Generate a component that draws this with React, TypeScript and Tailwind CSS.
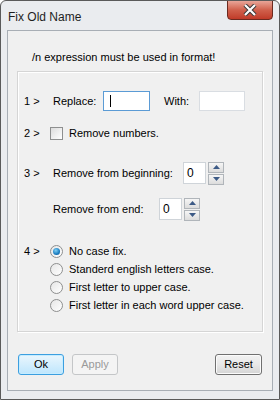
import { useState } from "react";

const font = { fontFamily: '"Liberation Sans", Arial, sans-serif' };

function Spinner({ value }: { value: number }) {
  return (
    <div className="flex items-center gap-[2px]">
      <div className="w-[23px] h-[22px] border border-[#cfd4d9] bg-white pl-[3px] pt-[1px] text-[12px] leading-[18px]">
        {value}
      </div>
      <div className="flex flex-col gap-[1px]">
        <div className="w-[16px] h-[11px] border border-[#b0b5ba] bg-gradient-to-b from-[#f6f6f6] to-[#dcdcdc] flex items-center justify-center">
          <svg width="7" height="4" viewBox="0 0 7 4">
            <path d="M0 4 L3.5 0 L7 4 Z" fill="#3c5a86" />
          </svg>
        </div>
        <div className="w-[16px] h-[11px] border border-[#b0b5ba] bg-gradient-to-b from-[#f6f6f6] to-[#dcdcdc] flex items-center justify-center">
          <svg width="7" height="4" viewBox="0 0 7 4">
            <path d="M0 0 L7 0 L3.5 4 Z" fill="#3c5a86" />
          </svg>
        </div>
      </div>
    </div>
  );
}

function Radio({ checked, label }: { checked?: boolean; label: string }) {
  return (
    <div className="flex items-center h-[18px]">
      <div className="w-[13px] h-[13px] rounded-full border border-[#8e8f8f] bg-gradient-to-br from-[#e6e6e6] to-[#ffffff] flex items-center justify-center">
        {checked && (
          <div className="w-[7px] h-[7px] rounded-full bg-[radial-gradient(circle_at_40%_35%,#7fd0f5,#1a7cc0_60%,#0d4f8a)]" />
        )}
      </div>
      <span className="ml-[6px] whitespace-nowrap">{label}</span>
    </div>
  );
}

export default function App() {
  const [replace] = useState("");

  return (
    <div
      className="w-[280px] h-[400px] bg-[#eaecef] border border-[#5a5a5a] rounded-t-[6px] flex flex-col text-[11px] text-black overflow-hidden whitespace-nowrap"
      style={font}
    >
      {/* title bar */}
      <div className="h-[29px] flex items-start shrink-0">
        <div className="pl-[7px] pt-[7px] text-[12px] text-[#1e1e1e]">Fix Old Name</div>
        <div className="ml-auto mr-[6px] mt-[-1px] w-[46px] h-[20px] rounded-b-[4px] border border-[#6b2a20] bg-gradient-to-b from-[#e8a598] via-[#d0604c] to-[#c03a28] flex items-center justify-center">
          <svg width="14" height="12" viewBox="0 0 14 12">
            <path d="M2 1 L12 11 M12 1 L2 11" stroke="#3a3a3a" strokeWidth="4.2" />
            <path d="M2 1 L12 11 M12 1 L2 11" stroke="#ffffff" strokeWidth="2.2" />
          </svg>
        </div>
      </div>

      {/* client area */}
      <div className="mx-[6px] mb-[8px] flex-1 border border-[#a8aeb5] bg-[#f0f0f0] flex flex-col">
        <div className="pl-[24px] pt-[18px] h-[40px]">/n expression must be used in format!</div>

        {/* group box */}
        <div className="ml-[9px] w-[246px] h-[261px] border border-[#d5d5d5] shadow-[inset_1px_1px_0_#ffffff,1px_1px_0_#ffffff] flex flex-col pl-[6px]">
          <div className="mt-[19px] flex items-center h-[20px]">
            <span className="w-[29px]">1 &gt;</span>
            <span className="w-[50px]">Replace:</span>
            <div className="w-[47px] h-[20px] border border-[#5b9bd5] bg-white flex items-center pl-[6px]">
              {replace}
              <div className="w-[1px] h-[12px] bg-black" />
            </div>
            <span className="ml-[14px] w-[35px]">With:</span>
            <div className="w-[46px] h-[20px] border border-[#d9dde2] bg-white" />
          </div>

          <div className="mt-[13px] flex items-center h-[18px]">
            <span className="w-[26px]">2 &gt;</span>
            <div className="w-[13px] h-[13px] border border-[#8e8f8f] bg-gradient-to-br from-[#dcdcdc] to-[#ffffff]" />
            <span className="ml-[6px]">Remove numbers.</span>
          </div>

          <div className="mt-[20px] flex items-center h-[22px]">
            <span className="w-[29px]">3 &gt;</span>
            <span className="w-[130px]">Remove from beginning:</span>
            <Spinner value={0} />
          </div>

          <div className="mt-[14px] flex items-center h-[22px] pl-[29px]">
            <span className="w-[106px]">Remove from end:</span>
            <Spinner value={0} />
          </div>

          <div className="mt-[22px] flex">
            <span className="w-[26px] h-[18px] leading-[18px]">4 &gt;</span>
            <div className="flex flex-col">
              <Radio checked label="No case fix." />
              <Radio label="Standerd english letters case." />
              <Radio label="First letter to upper case." />
              <Radio label="First letter in each word upper case." />
            </div>
          </div>
        </div>

        {/* buttons */}
        <div className="mt-[22px] flex items-center pl-[10px] pr-[10px]">
          <button className="w-[46px] h-[21px] rounded-[3px] border border-[#3c9fe0] bg-gradient-to-b from-[#eaf6fd] to-[#bee6fd] shadow-[inset_0_0_0_1px_#c6ecff]">
            Ok
          </button>
          <button className="ml-[8px] w-[46px] h-[21px] rounded-[3px] border border-[#c4c6c8] bg-[#f4f4f4] text-[#9a9a9a]">
            Apply
          </button>
          <button className="ml-auto w-[47px] h-[21px] rounded-[3px] border border-[#707070] bg-gradient-to-b from-[#f2f2f2] via-[#e8e8e8] to-[#d4d4d4] shadow-[inset_0_0_0_1px_#fbfbfb]">
            Reset
          </button>
        </div>
      </div>
    </div>
  );
}
